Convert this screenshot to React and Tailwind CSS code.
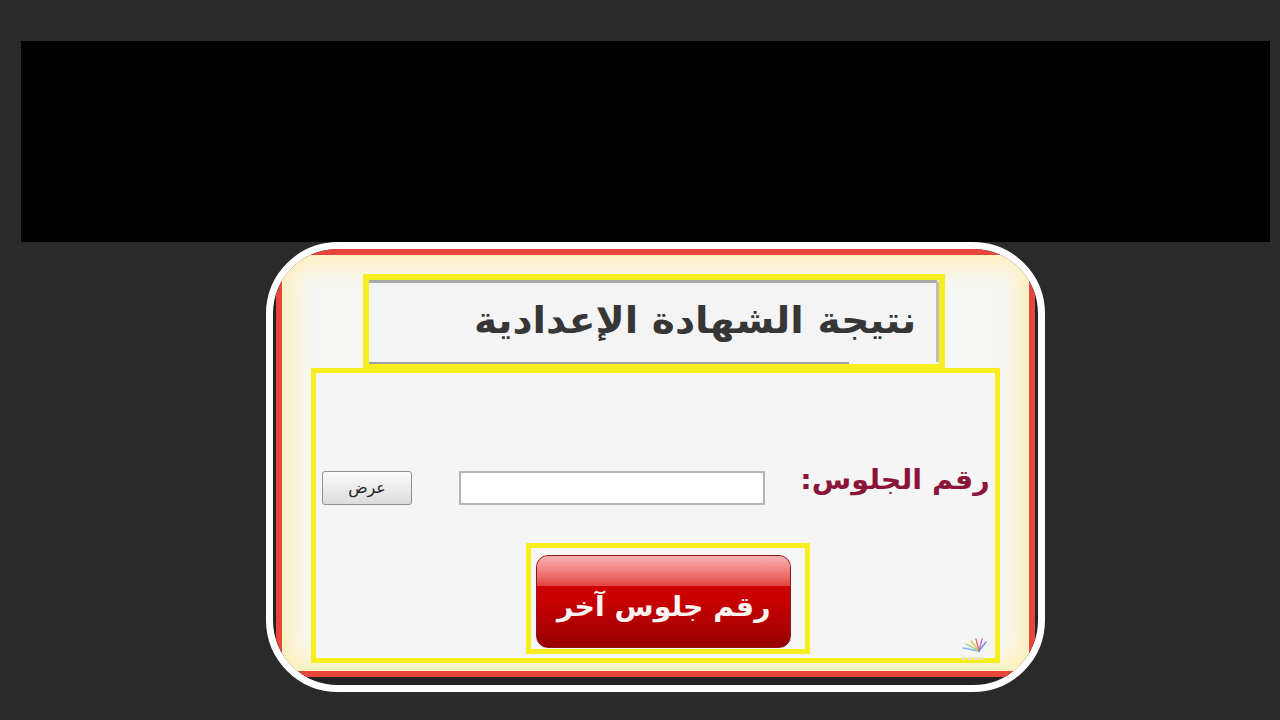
import React from "react";

function Logo() {
  return (
    <svg width="30" height="28" viewBox="0 0 30 28" className="absolute right-[40px] bottom-[6px]">
      <g strokeWidth="1.4" strokeLinecap="round">
        <line x1="20" y1="14" x2="4" y2="11" stroke="#7fb6e0" />
        <line x1="20" y1="14" x2="7" y2="7" stroke="#8fd08a" />
        <line x1="20" y1="14" x2="12" y2="4" stroke="#f0c04a" />
        <line x1="20" y1="14" x2="17" y2="2" stroke="#e86a6a" />
        <line x1="20" y1="14" x2="23" y2="2" stroke="#c06ad0" />
        <line x1="20" y1="14" x2="27" y2="5" stroke="#6a8ae0" />
      </g>
      <g fill="#e8e2c8">
        <rect x="3" y="20" width="4" height="3" />
        <rect x="9" y="20" width="4" height="3" />
        <rect x="15" y="20" width="4" height="3" />
        <rect x="21" y="20" width="4" height="3" />
      </g>
    </svg>
  );
}

export default function App() {
  const ar = { fontFamily: '"DejaVu Sans", "Noto Sans", sans-serif' };
  return (
    <div className="w-[1280px] h-[720px] bg-[#2a2a2a] overflow-hidden flex flex-col">
      <div className="mt-[41px] ml-[21px] w-[1249px] h-[201px] bg-black shrink-0" />
      <div className="ml-[266px] w-[779px] h-[450px] border-[7px] border-white rounded-[72px] bg-[#222222] overflow-hidden pl-[3px] pr-[3px] pb-[8px] shrink-0">
        <div className="w-full h-full bg-[#e8453c] p-[6px]">
          <div className="relative w-full h-full bg-[#f6f6f4] shadow-[inset_0_0_24px_10px_#fdefb4] flex flex-col">
            {/* Title box */}
            <div className="mt-[19px] ml-[81px] w-[582px] h-[96px] border-[6px] border-[#f6ee1e] bg-[#f4f4f4] flex flex-col">
              <div className="flex-1 border-t-[3px] border-t-[#a8a8a8] border-r-[3px] border-r-[#bdbdbd] rounded-tr-[4px] flex items-center justify-end pr-[20px] pb-[4px]">
                <span dir="rtl" style={ar} className="inline-block origin-right scale-x-[1.06] text-[37px] font-bold text-[#363636] leading-none">
                  نتيجة الشهادة الإعدادية
                </span>
              </div>
              <div className="h-[2px] w-[480px] bg-[#a0a0a0]" />
            </div>
            {/* Main box */}
            <div className="-mt-[2px] ml-[29px] w-[689px] h-[295px] border-[5px] border-[#f6ee1e] bg-[#f5f5f5] flex flex-col">
              <div className="mt-[98px] flex items-center h-[34px]">
                <button
                  style={ar}
                  className="ml-[6px] w-[90px] h-[34px] border border-[#8f8f8f] rounded-[3px] bg-gradient-to-b from-[#fbfbfb] to-[#dcdcdc] text-[16px] text-[#222] flex items-center justify-center"
                >
                  عرض
                </button>
                <div className="ml-[47px] w-[306px] h-[34px] border-2 border-[#b5b5b5] bg-white" />
                <span dir="rtl" style={ar} className="ml-auto mr-[5px] -mt-[18px] inline-block origin-right scale-x-[1.06] text-[27px] font-bold text-[#8a1538] leading-none">
                  رقم الجلوس:
                </span>
              </div>
              <div className="mt-[38px] ml-[210px] w-[284px] h-[111px] border-[5px] border-[#f6ee1e] bg-[#f6f6f6] pt-[7px] pl-[5px] pr-[14px] pb-[1px]">
                <div className="relative w-full h-full rounded-[12px] overflow-hidden border border-[#8a1a1a] bg-gradient-to-b from-[#d80000] via-[#c80000] to-[#980000] flex items-center justify-center">
                  <div className="absolute left-0 right-0 top-0 h-[30px] bg-gradient-to-b from-[#f5b0b0] via-[#f08080] to-[#e24040]" />
                  <span dir="rtl" style={ar} className="relative mt-[10px] inline-block scale-x-[1.05] text-[27px] font-bold text-[#fff4f4] leading-none">
                    رقم جلوس آخر
                  </span>
                </div>
              </div>
            </div>
            <Logo />
          </div>
        </div>
      </div>
    </div>
  );
}
